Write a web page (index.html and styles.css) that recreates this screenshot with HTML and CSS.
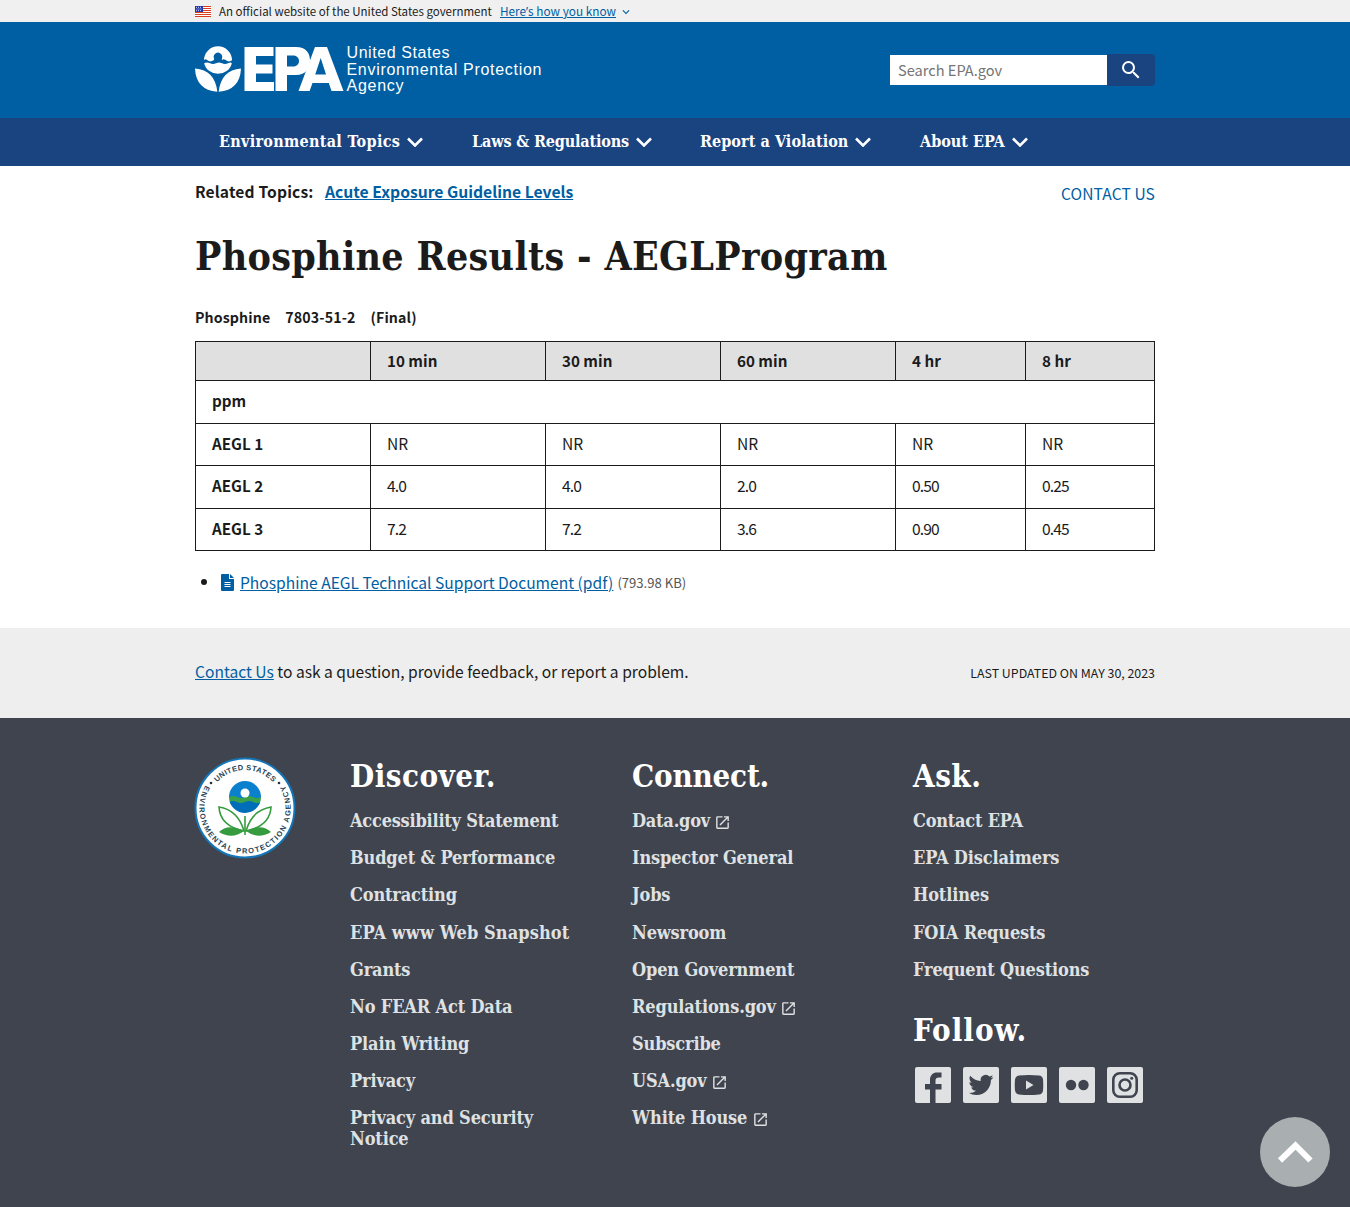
FILE: index.html
```html
<!DOCTYPE html>
<html lang="en">
<head>
<meta charset="utf-8">
<title>Phosphine Results - AEGL Program | US EPA</title>
<link rel="stylesheet" href="styles.css">
</head>
<body>
<svg width="0" height="0" class="sprite" aria-hidden="true">
  <symbol id="expand" viewBox="0 0 24 24"><path d="M16.59 8.59 12 13.17 7.41 8.59 6 10l6 6 6-6z"/></symbol>
  <symbol id="launch" viewBox="0 0 24 24"><path d="M19 19H5V5h7V3H5a2 2 0 0 0-2 2v14a2 2 0 0 0 2 2h14c1.1 0 2-.9 2-2v-7h-2v7zM14 3v2h3.59l-9.83 9.83 1.41 1.41L19 6.41V10h2V3h-7z"/></symbol>
</svg>

<div class="banner"><div class="wrap banner-row">
  <svg class="flag" width="16" height="11" viewBox="0 0 16 11"><path fill="#fff" d="M0 0h16v11H0z"/><path stroke="#db3e1f" stroke-width="1" d="M0 .5h16M0 2.5h16M0 4.5h16M0 6.5h16M0 8.5h16M0 10.5h16"/><path fill="#1e33b1" d="M0 0h8v6H0z"/><path stroke="#fff" stroke-width=".8" stroke-dasharray="1 1" d="M1 1.3h6M1.5 3h6M1 4.7h6"/></svg>
  <span class="official">An official website of the United States government</span>
  <a class="know">Here<span class="apos">’</span>s how you know</a>
  <svg class="know-arrow" width="14" height="14"><use href="#expand"/></svg>
</div></div>

<header class="header"><div class="wrap header-row">
  <svg class="logo" width="350" height="52" viewBox="0 0 350 52">
    <g fill="#fff">
      <path d="M9 15.3A14 14 0 0 1 37 15.3Q34 17.6 31 15.3T27.3 15.3L26.7 14A4.3 4.3 0 1 0 19.2 14L18.7 15.3Q15 17.6 12.5 15.3T9 15.3Z"/>
      <path d="M9.2 18.2Q12 16.7 15 18.2T21 18.2T27 18.2T33 18.2T36.8 18.2A14 12.8 0 0 1 9.2 18.2Z"/>
      <path d="M0 23.5Q20 25 22.300 46.8Q1 45 0 23.5ZM46 23.5Q26 25 23.700 46.8Q45 45 46 23.5Z"/>
      <path d="M49.5 2H78.500V11H61V19.500H77.500V28.500H61V37H79V46H49.500Z"/>
      <path fill-rule="evenodd" d="M80.500 2H101C111 2 115 8 115 15.500S111 30 101 30H92V46H80.500ZM92 10.500V21.500H98C106 21.500 106 10.500 98 10.500Z"/>
      <path fill-rule="evenodd" d="M120 2H132L148.500 46H136.500L133.800 38H117.500L114.600 46H103.500ZM125.700 13L120.200 29.500H131Z"/>
    </g>
    <g class="logo-text"><text x="151.500" y="13" textLength="103">United States</text><text x="151.500" y="29.700" textLength="195">Environmental Protection</text><text x="151.500" y="46" textLength="57">Agency</text></g>
  </svg>
  <form class="search"><input placeholder="Search EPA.gov" aria-label="Search"><button type="button" aria-label="Search"><svg width="24" height="24" viewBox="0 0 24 24"><path fill="#fff" d="M15.500 14h-.79l-.28-.27A6.470 6.470 0 0 0 16 9.500 6.500 6.500 0 1 0 9.500 16c1.610 0 3.090-.59 4.230-1.570l.27.28v.79l5 4.990L20.490 19l-4.990-5zm-6 0C7.010 14 5 11.990 5 9.500S7.010 5 9.500 5 14 7.010 14 9.500 11.990 14 9.500 14z"/></svg></button></form>
</div></header>

<nav class="nav"><div class="wrap nav-row">
  <a class="n1">Environmental Topics<svg viewBox="0 0 16 10"><path d="M1 1.500l7 7 7-7"/></svg></a>
  <a class="n2">Laws &amp; Regulations<svg viewBox="0 0 16 10"><path d="M1 1.500l7 7 7-7"/></svg></a>
  <a class="n3">Report a Violation<svg viewBox="0 0 16 10"><path d="M1 1.500l7 7 7-7"/></svg></a>
  <a class="n4">About EPA<svg viewBox="0 0 16 10"><path d="M1 1.500l7 7 7-7"/></svg></a>
</div></nav>

<main class="wrap main">
  <div class="topics"><span class="related">Related Topics:</span><a class="topic">Acute Exposure Guideline Levels</a><a class="contact">CONTACT US</a></div>
  <h1>Phosphine Results - AEGLProgram</h1>
  <div class="chem"><span>Phosphine</span><span>7803-51-2</span><span>(Final)</span></div>
  <table>
    <colgroup><col class="c"><col class="c"><col class="c"><col class="c"><col class="d"><col></colgroup>
    <thead><tr><th></th><th>10 min</th><th>30 min</th><th>60 min</th><th>4 hr</th><th>8 hr</th></tr></thead>
    <tbody>
      <tr class="ppm"><th colspan="6">ppm</th></tr>
      <tr class="r1 nr"><th>AEGL 1</th><td>NR</td><td>NR</td><td>NR</td><td>NR</td><td>NR</td></tr>
      <tr class="r2"><th>AEGL 2</th><td>4.0</td><td>4.0</td><td>2.0</td><td>0.50</td><td>0.25</td></tr>
      <tr class="r1"><th>AEGL 3</th><td>7.2</td><td>7.2</td><td>3.6</td><td>0.90</td><td>0.45</td></tr>
    </tbody>
  </table>
  <div class="doc"><i class="dot"></i>
    <svg width="13" height="17" viewBox="0 0 13 17"><path fill="#005ea2" d="M0 1a1 1 0 0 1 1-1h7v5h5v11a1 1 0 0 1-1 1H1a1 1 0 0 1-1-1zM9 0l4 4H9z"/><path stroke="#fff" d="M3.500 8.500h6M3.500 10.500h6M3.500 12.500h6"/></svg>
    <a>Phosphine AEGL Technical Support Document (pdf)</a><span class="size">(793.98 KB)</span></div>
</main>

<section class="feedback"><div class="wrap feedback-row"><p><a>Contact Us</a> to ask a question, provide feedback, or report a problem.</p><span class="updated">LAST UPDATED ON MAY 30, 2023</span></div></section>

<footer class="footer"><div class="wrap footer-grid">
  <svg class="seal" width="104" height="104" viewBox="0 0 104 104">
    <defs><path id="arc-top" d="M14 52A38 38 0 0 1 90 52"/><path id="arc-bottom" d="M12.500 29.200A45.600 45.600 0 1 0 91.500 29.200"/><clipPath id="flower"><circle cx="52" cy="41" r="16"/></clipPath></defs>
    <circle cx="52" cy="52" r="49.500" fill="#fff" stroke="#1476b8" stroke-width="2"/>
    <g class="seal-text"><text><textPath href="#arc-top" startOffset="50%" text-anchor="middle" textLength="63">UNITED STATES</textPath></text><text><textPath href="#arc-bottom" startOffset="50%" text-anchor="middle" textLength="190">ENVIRONMENTAL PROTECTION AGENCY</textPath></text></g>
    <circle cx="18" cy="27" r="1.300" fill="#234"/><circle cx="86" cy="27" r="1.300" fill="#234"/>
    <g clip-path="url(#flower)"><path fill="#0b80cc" d="M36 25h32v17H36z"/><path fill="#39a04b" d="M36 41q4-2 8 0t8 0 8 0 8 0v8H36z"/><path fill="#006db8" d="M36 46q4-2 8 0t8 0 8 0 8 0v14H36z"/></g>
    <circle cx="52" cy="37" r="4.500" fill="#fff"/>
    <g fill="#fff" stroke="#369b3f" stroke-width="1.600"><path d="M51 75Q45 54 26 51Q27 70 51 75ZM53 75Q59 54 78 51Q77 70 53 75Z"/></g>
    <path fill="#369b3f" d="M26 76q9-9 25-1-12 9-25 1zM78 76q-9-9-25-1 12 9 25 1z"/><path stroke="#369b3f" stroke-width="1.600" d="M52 60v19"/>
  </svg>
  <div class="col col1"><h2>Discover.</h2><ul><li>Accessibility Statement</li><li>Budget &amp; Performance</li><li>Contracting</li><li class="snapshot">EPA www Web Snapshot</li><li>Grants</li><li>No FEAR Act Data</li><li>Plain Writing</li><li>Privacy</li><li>Privacy and Security<br>Notice</li></ul></div>
  <div class="col"><h2 class="connect">Connect.</h2><ul><li>Data.gov<svg><use href="#launch"/></svg></li><li>Inspector General</li><li>Jobs</li><li>Newsroom</li><li>Open Government</li><li>Regulations.gov<svg><use href="#launch"/></svg></li><li>Subscribe</li><li>USA.gov<svg><use href="#launch"/></svg></li><li>White House<svg><use href="#launch"/></svg></li></ul></div>
  <div class="col"><h2>Ask.</h2><ul><li>Contact EPA</li><li>EPA Disclaimers</li><li>Hotlines</li><li>FOIA Requests</li><li>Frequent Questions</li></ul>
    <h2 class="follow">Follow.</h2>
    <div class="social">
      <svg viewBox="0 0 36 36"><rect width="36" height="36" rx="2"/><path class="k" d="M15 36V22.500h-5V17h5v-4c0-5 3-7.500 7-7.500h4.500v5H24c-2.500 0-3.500 1-3.500 3V17h6v5.500h-6V36z"/></svg>
      <svg viewBox="0 0 36 36"><rect width="36" height="36" rx="2"/><path class="k" transform="translate(5.500 5.500) scale(1.040)" d="M23.950 4.570a10 10 0 0 1-2.820.77 4.960 4.960 0 0 0 2.160-2.720c-.95.550-2 .95-3.130 1.180a4.920 4.920 0 0 0-8.380 4.480C7.690 8.090 4.070 6.130 1.640 3.160a4.820 4.820 0 0 0-.67 2.480c0 1.710.87 3.210 2.190 4.100a4.900 4.900 0 0 1-2.230-.62v.06a4.920 4.920 0 0 0 3.950 4.830 5 5 0 0 1-2.210.08 4.940 4.940 0 0 0 4.600 3.420A9.870 9.870 0 0 1 0 19.540a14 14 0 0 0 7.550 2.210c9.050 0 14-7.500 14-13.980 0-.21 0-.42-.02-.63a9.940 9.940 0 0 0 2.460-2.550z"/></svg>
      <svg viewBox="0 0 36 36"><rect width="36" height="36" rx="2"/><path class="k" d="M8 8.500q10-1 20 0 3.500.3 4 4 .5 5.500 0 11-.5 3.700-4 4-10 1-20 0-3.500-.3-4-4-.5-5.500 0-11 .5-3.700 4-4z"/><path d="M15 13.500v9l7.500-4.500z"/></svg>
      <svg viewBox="0 0 36 36"><rect width="36" height="36" rx="2"/><circle class="k" cx="12" cy="18" r="5.200"/><circle class="k" cx="24.500" cy="18" r="5.200"/></svg>
      <svg viewBox="0 0 36 36"><rect width="36" height="36" rx="2"/><g class="line"><rect x="6.300" y="6.300" width="23.400" height="23.400" rx="6.500"/><circle cx="18" cy="18" r="5.500"/></g><circle class="k" cx="24.700" cy="11.300" r="1.500"/></svg>
    </div>
  </div>
</div></footer>
<a class="top" aria-label="Back to top"><svg width="36" height="24" viewBox="0 0 36 24"><path fill="none" stroke="#fff" stroke-width="6" d="M3 20.500L18.500 5.500l15 15"/></svg></a>
</body>
</html>
```
FILE: styles.css
```css
* { box-sizing: border-box; }
body { margin: 0; width: 1350px; background: #fff; color: #1b1b1b; font-family: "Noto Sans CJK SC", "Noto Sans", sans-serif; font-size: 15.6px; line-height: 24px; }
h1, h2, ul, p { margin: 0; padding: 0; }
a { color: #005ea2; }
.sprite { position: absolute; }
.wrap { width: 960px; margin: 0 auto; }

.banner { height: 22px; background: #f0f0f0; }
.banner-row { display: flex; align-items: center; height: 22px; font-size: 11.5px; line-height: 22px; white-space: nowrap; }
.flag { margin-right: 8px; }
.official { width: 281px; }
.know { font-size: 11.8px; text-decoration: underline; }
.apos { font-family: "Open Sans", sans-serif; }
.know-arrow { margin: 2px 0 0 3px; fill: #005ea2; }

.header { height: 96px; background: #005ea2; }
.header-row { display: flex; justify-content: space-between; padding-top: 23px; }
.logo-text { fill: #fff; font: 16px "Liberation Sans", Arial, sans-serif; }
.search { display: flex; margin-top: 9px; width: 265px; height: 32px; }
.search input { width: 217px; height: 30px; margin-top: 1px; border: 0; padding: 0 8px 2px; font: 14.6px "Noto Sans CJK SC", sans-serif; }
.search input::placeholder { color: #757575; }
.search button { width: 48px; height: 32px; padding: 0; border: 0; border-radius: 0 4px 4px 0; background: #1a4480; display: flex; align-items: center; justify-content: center; }

.nav { height: 48px; background: #1a4480; }
.nav-row { display: flex; padding-left: 24px; }
.nav a { display: flex; align-items: center; height: 47px; color: #fff; font: bold 16px "DejaVu Serif Condensed", "DejaVu Serif", serif; white-space: nowrap; }
.nav svg { width: 16px; height: 10px; margin-left: 7px; fill: none; stroke: #fff; stroke-width: 2.600; }
.nav .n1 { width: 253px; letter-spacing: .3px; }
.nav .n2 { width: 228px; letter-spacing: -.15px; }
.nav .n3 { width: 220px; letter-spacing: .06px; }

.main { height: 462px; padding-top: 13px; }
.topics { display: flex; align-items: baseline; height: 24px; margin-top: -2px; font-weight: bold; white-space: nowrap; }
.related { width: 130px; letter-spacing: .15px; }
.topic { font-size: 15.7px; text-decoration: underline; }
.contact { margin-left: auto; padding-top: 2px; font-weight: normal; letter-spacing: .1px; position: relative; top: 2px; }
h1 { margin-top: 28px; font: bold 39px/54px "DejaVu Serif Condensed", "DejaVu Serif", serif; letter-spacing: .3px; white-space: nowrap; }
.chem { display: flex; gap: 15px; margin: 22px 0 12px; font-size: 14.2px; letter-spacing: .12px; font-weight: bold; }
table { width: 960px; table-layout: fixed; border-collapse: collapse; font-size: 15.2px; }
.c { width: 175px; }
.d { width: 130px; }
th, td { border: 1px solid #1b1b1b; padding: 0 16px 3px; text-align: left; line-height: 24px; }
td { font-size: 15.6px; letter-spacing: -.85px; }
.nr td { letter-spacing: 0; }
thead th { height: 39px; padding-bottom: 2px; background: #e0e0e0; }
.ppm th { height: 43px; padding-bottom: 4px; }
.r1 { height: 42px; }
.r2 { height: 43px; }
.r2 th, .r2 td { padding-bottom: 4px; }
.doc { display: flex; align-items: center; height: 24px; margin-top: 19px; padding-left: 6px; white-space: nowrap; }
.dot { width: 6px; height: 6px; margin-right: 14px; border-radius: 50%; background: #1b1b1b; }
.doc a { margin-left: 6px; text-decoration: underline; }
.size { margin-left: 4px; padding-top: 1px; font-size: 13.1px; color: #555; }

.feedback { height: 90px; background: #eeeeee; }
.feedback-row { display: flex; justify-content: space-between; align-items: center; height: 86px; white-space: nowrap; }
.feedback a { text-decoration: underline; }
.updated { font-size: 12.4px; padding-top: 3px; }

.footer { height: 489px; background: #3f444f; }
.footer-grid { display: grid; grid-template-columns: 155px 282px 281px 242px; padding-top: 38px; font-family: "DejaVu Serif Condensed", "DejaVu Serif", serif; }
.seal { margin-left: -2px; }
.seal-text { fill: #254558; font: bold 7.500px "Liberation Sans", sans-serif; }
.col h2 { font-size: 31px; line-height: 40px; letter-spacing: .5px; color: #fff; }
.col .connect { letter-spacing: -.2px; }
.col ul { list-style: none; padding-top: 14px; }
.col li { font-size: 18px; font-weight: bold; line-height: 21px; letter-spacing: -.15px; margin-bottom: 16.180px; color: #dfe1e2; white-space: nowrap; }
.col li:first-child { letter-spacing: -.22px; }
.col .snapshot { letter-spacing: .1px; }
.col li svg { width: 17px; height: 17px; margin-left: 4.500px; vertical-align: -4px; fill: #dfe1e2; }
.col .follow { margin-top: 30px; letter-spacing: 1px; }
.social { display: flex; gap: 12px; margin: 17px 0 0 2px; }
.social svg { width: 36px; height: 36px; fill: #dfe1e2; }
.social .k { fill: #3f444f; }
.social .line { fill: none; stroke: #3f444f; stroke-width: 2.600; }
.top { position: fixed; left: 1260px; top: 1117px; width: 70px; height: 70px; border-radius: 50%; background: #a9aeb1; display: flex; align-items: center; justify-content: center; }
```
